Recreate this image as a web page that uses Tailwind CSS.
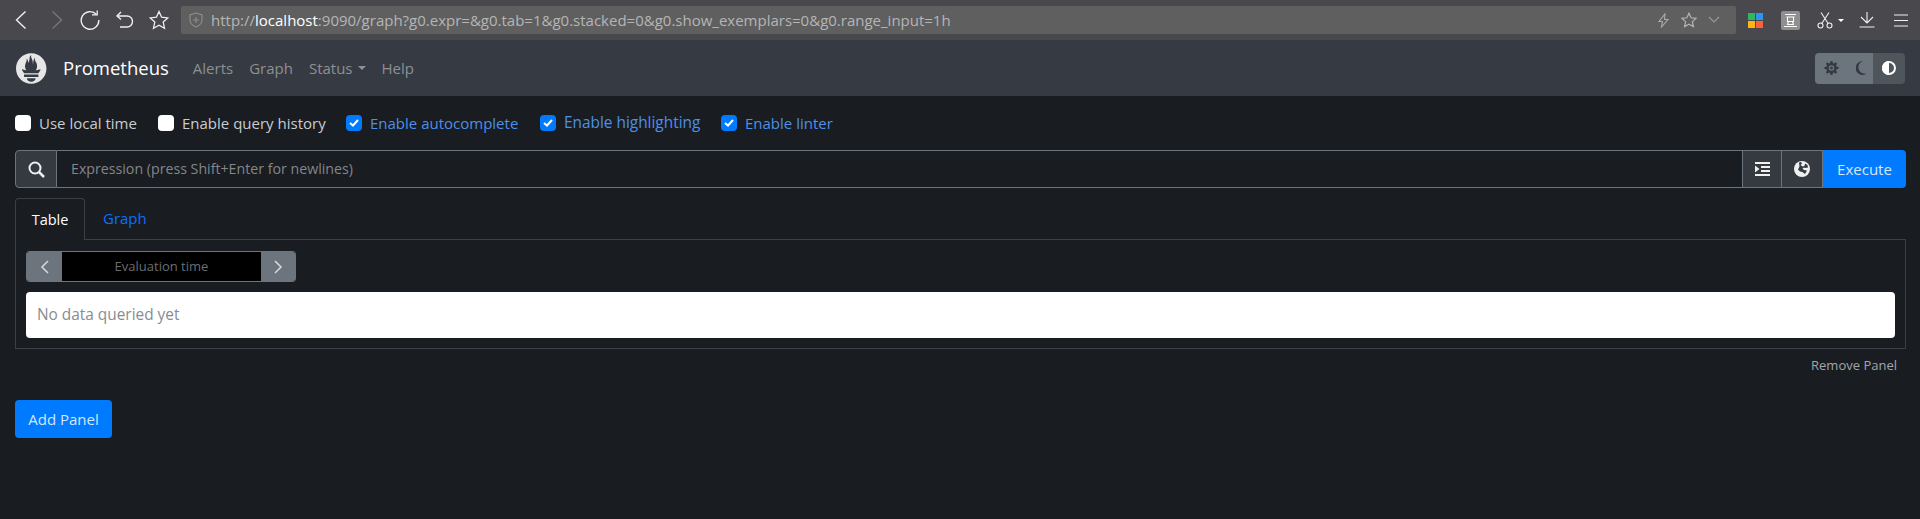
<!doctype html>
<html lang="en">
<head>
    <meta charset="utf-8">
    <title>Prometheus Time Series Collection and Processing Server</title>
    <script src="https://cdn.jsdelivr.net/npm/@tailwindcss/browser@4"></script>
</head>
<body class="bg-[#191c21] h-[519px] overflow-hidden font-['Open_Sans',sans-serif] text-[15px] text-[#c9ccd0]">

    <!-- Browser toolbar -->
    <div class="h-[40px] bg-[#49484d] flex items-center text-[#f2f2f2]">
        <div class="w-[181px] shrink-0 flex items-center pl-[15px]">
            <svg class="w-[12px] h-[20px]" viewBox="0 0 12 20" fill="none" stroke="#f0f0f0" stroke-width="1.4"><path d="M10.5 1.5 1.5 10l9 8.500"/></svg>
            <svg class="w-[12px] h-[20px] ml-[24px]" viewBox="0 0 12 20" fill="none" stroke="#77777a" stroke-width="1.4"><path d="M1.500 1.500 10.500 10l-9 8.500"/></svg>
            <svg class="w-[20px] h-[20px] ml-[17px]" viewBox="0 0 20 20" fill="none" stroke="#f0f0f0" stroke-width="1.400"><path d="M16.500 4.500A8.800 8.800 0 1 0 18.800 10"/><path d="M12 4.800h5.200V0.500" stroke-width="1.300"/></svg>
            <svg class="w-[18px] h-[18px] ml-[16px]" viewBox="0 0 18 18" fill="none" stroke="#f0f0f0" stroke-width="1.400"><path d="M1 5h10a5.500 5.500 0 0 1 0 11H4"/><path d="M5 1 1 5l4 3.500"/></svg>
            <svg class="w-[20px] h-[20px] ml-[15px]" viewBox="0 0 20 20" fill="none" stroke="#f0f0f0" stroke-width="1.300"><path d="m10 1.500 2.600 5.700 6.200.7-4.600 4.200 1.300 6.100L10 15.200l-5.500 3 1.300-6.100L1.200 7.900l6.200-.7z"/></svg>
        </div>
        <div class="w-[1555px] h-[28px] bg-[#5f5f60] rounded-[2px] flex items-center pl-[8px] pr-[16px] shrink-0">
            <svg class="w-[14px] h-[16px] shrink-0" viewBox="0 0 14 16" fill="none" stroke="#8e8e90" stroke-width="1.100"><path d="M7 1 1 3v5c0 3.500 3 5.800 6 7 3-1.200 6-3.500 6-7V3z"/><path d="M7 5v6M4 8h6"/></svg>
            <div class="ml-[8px] text-[15px] text-[#b5b5b6] whitespace-nowrap">http://<span class="text-white">localhost</span>:9090/graph?g0.expr=&amp;g0.tab=1&amp;g0.stacked=0&amp;g0.show_exemplars=0&amp;g0.range_input=1h</div>
            <div class="ml-auto flex items-center gap-[11px]">
                <svg class="w-[13px] h-[15px]" viewBox="0 0 13 15" fill="none" stroke="#a9a9aa" stroke-width="1.100"><path d="M8 .8 2 8.500h3.500L4.500 14 11 6.500H7.500z"/></svg>
                <svg class="w-[16px] h-[16px]" viewBox="0 0 20 20" fill="none" stroke="#b5b5b6" stroke-width="1.500"><path d="m10 1.500 2.600 5.700 6.200.7-4.600 4.200 1.300 6.100L10 15.200l-5.500 3 1.300-6.100L1.200 7.900l6.200-.7z"/></svg>
                <svg class="w-[12px] h-[8px]" viewBox="0 0 12 8" fill="none" stroke="#9a9a9b" stroke-width="1.100"><path d="m1 1 5 5 5-5"/></svg>
            </div>
        </div>
        <div class="flex-1 flex items-center pl-[12px]">
            <div class="grid grid-cols-2 gap-[1px] w-[15px] h-[15px]">
                <div class="bg-[#2fb85f]"></div><div class="bg-[#2e94f2]"></div>
                <div class="bg-[#fdb614]"></div><div class="bg-[#f9623a]"></div>
            </div>
            <div class="w-[19px] h-[19px] ml-[18px] bg-[#8f8f90] rounded-[2px] flex items-center justify-center">
                <svg class="w-[15px] h-[15px]" viewBox="0 0 15 15" fill="none" stroke="#fff" stroke-width="1.100"><path d="M2 1.500h11M3.500 4h8M4.500 4v4.500h6V4M5.500 8.500l-1 3h6l-1-3M1 13.500h13"/></svg>
            </div>
            <svg class="w-[16px] h-[17px] ml-[17px]" viewBox="0 0 16 17" fill="none" stroke="#f0f0f0" stroke-width="1.100"><circle cx="3.500" cy="13.500" r="2.500"/><circle cx="12.500" cy="13.500" r="2.500"/><path d="M4.800 11.500 12 .5M11.200 11.500 4 .5"/></svg>
            <div class="ml-[5px] border-x-[3px] border-t-[3px] border-x-transparent border-t-white"></div>
            <svg class="w-[16px] h-[16px] ml-[15px]" viewBox="0 0 16 16" fill="none" stroke="#f0f0f0" stroke-width="1.100"><path d="M8 0v11M2 5l6 6 6-6M.5 15h15"/></svg>
            <svg class="w-[14px] h-[13px] ml-[19px]" viewBox="0 0 14 13" fill="none" stroke="#f0f0f0" stroke-width="1.100"><path d="M0 1h14M0 6.500h14M0 12h14"/></svg>
        </div>
    </div>

    <!-- Navbar -->
    <nav class="h-[56px] bg-[#363a42] flex items-center pl-[16px] pr-[15px]">
        <svg class="w-[31px] h-[31px] shrink-0" viewBox="0 0 115.333 114" fill="#e6e6e6"><path d="M56.667.667C25.372.667 0 26.036 0 57.332c0 31.295 25.372 56.666 56.667 56.666s56.666-25.371 56.666-56.666C113.333 26.036 87.961.667 56.667.667zm0 106.055c-8.904 0-16.123-5.948-16.123-13.283H72.790c0 7.334-7.219 13.283-16.123 13.283zm26.628-17.682H30.034v-9.657h53.262v9.657zm-.191-14.628H30.197c-.176-.203-.356-.403-.526-.609-5.452-6.620-6.736-10.076-7.983-13.598-.021-.116 6.611 1.355 11.314 2.413 0 0 2.420.560 5.958 1.205-3.397-3.982-5.414-9.044-5.414-14.218 0-11.359 8.712-21.285 5.569-29.308 3.059.249 6.331 6.456 6.552 16.161 3.252-4.494 4.613-12.701 4.613-17.733 0-5.210 3.433-11.262 6.867-11.469-3.061 5.045.793 9.370 4.219 20.099 1.285 4.030 1.121 10.812 2.113 15.113.329-8.933 1.865-21.967 7.532-26.467-2.500 5.667.370 12.758 2.333 16.167 3.167 5.500 5.087 9.667 5.087 17.548 0 5.284-1.951 10.259-5.242 14.148 3.742-.702 6.326-1.335 6.326-1.335l12.152-2.371c.001-.001-1.765 7.261-8.562 14.254z"/></svg>
        <span class="ml-[16px] text-[18.5px] text-white">Prometheus</span>
        <div class="ml-[24px] flex items-center text-[15px] text-[#8d9094]">
            <a>Alerts</a>
            <a class="ml-[16px]">Graph</a>
            <a class="ml-[16px] flex items-center">Status<span class="ml-[5px] border-x-[4px] border-t-[4px] border-x-transparent border-t-[#8d9094]"></span></a>
            <a class="ml-[16px]">Help</a>
        </div>
        <div class="ml-auto h-[31px] flex rounded-[4px] overflow-hidden">
            <div class="w-[58px] bg-[#6c757d] flex items-center justify-between pl-[9px] pr-[6px]">
                <svg class="w-[15px] h-[15px]" viewBox="0 0 16 16" fill="#343a40"><path fill-rule="evenodd" d="M7 0h2l.4 2.100 1.300.5L12.500 1.400 14 2.800l-1.200 1.800.6 1.300 2.100.4v2l-2.100.4-.6 1.300L14 12l-1.500 1.500-1.800-1.200-1.300.6L9 15H7l-.4-2.100-1.300-.6L3.500 13.500 2 12l1.200-1.800-.6-1.300L.5 8.500v-2l2.100-.4.6-1.300L2 2.800l1.500-1.400 1.800 1.200 1.300-.5zM8 4.500a3 3 0 1 0 0 6 3 3 0 0 0 0-6zm0 1.500a1.500 1.500 0 1 1 0 3 1.500 1.500 0 0 1 0-3z"/></svg>
                <svg class="w-[11px] h-[14px]" viewBox="0 0 11 14" fill="#343a40"><path d="M7 0a7 7 0 1 0 4 12.500A6 6 0 0 1 7 0z"/></svg>
            </div>
            <div class="w-[32px] bg-[#4e555b] flex items-center justify-center">
                <svg class="w-[14px] h-[14px]" viewBox="0 0 14 14"><circle cx="7" cy="7" r="6" fill="none" stroke="#fff" stroke-width="2"/><path d="M7 0a7 7 0 0 0 0 14z" fill="#fff"/></svg>
            </div>
        </div>
    </nav>

    <!-- Options -->
    <div class="h-[54px] px-[15px] flex items-center">
        <label class="flex items-center w-[143px]"><span class="w-[16px] h-[16px] bg-white rounded-[4px]"></span><span class="ml-[8px]">Use local time</span></label>
        <label class="flex items-center w-[188px]"><span class="w-[16px] h-[16px] bg-white rounded-[4px]"></span><span class="ml-[8px]">Enable query history</span></label>
        <label class="flex items-center w-[194px] text-[#4d90e6]"><span class="w-[16px] h-[16px] bg-[#007bff] rounded-[4px] flex items-center justify-center"><svg class="w-[10px] h-[8px]" viewBox="0 0 10 8" fill="none" stroke="#fff" stroke-width="2"><path d="m1 4 3 2.500L9 1"/></svg></span><span class="ml-[8px]">Enable autocomplete</span></label>
        <label class="flex items-center w-[181px] text-[#4d90e6]"><span class="w-[16px] h-[16px] bg-[#007bff] rounded-[4px] flex items-center justify-center"><svg class="w-[10px] h-[8px]" viewBox="0 0 10 8" fill="none" stroke="#fff" stroke-width="2"><path d="m1 4 3 2.500L9 1"/></svg></span><span class="ml-[8px] text-[15.400px]">Enable highlighting</span></label>
        <label class="flex items-center text-[#4d90e6]"><span class="w-[16px] h-[16px] bg-[#007bff] rounded-[4px] flex items-center justify-center"><svg class="w-[10px] h-[8px]" viewBox="0 0 10 8" fill="none" stroke="#fff" stroke-width="2"><path d="m1 4 3 2.500L9 1"/></svg></span><span class="ml-[8px]">Enable linter</span></label>
    </div>

    <div class="pl-[15px] pr-[14px]">
        <!-- Expression bar -->
        <div class="h-[38px] flex">
            <div class="w-[42px] bg-[#343a40] border border-[#6c757d] rounded-l-[4px] flex items-center justify-center">
                <svg class="w-[17px] h-[17px]" viewBox="0 0 17 17" fill="none" stroke="#f0f0f0" stroke-width="2"><circle cx="7" cy="7" r="5.500"/><path d="m11 11 5 5" stroke-width="2.500"/></svg>
            </div>
            <div class="flex-1 border-y border-[#6c757d] pl-[14px] flex items-center text-[14.200px] text-[#83868a]">Expression (press Shift+Enter for newlines)</div>
            <div class="w-[40px] bg-[#343a40] border border-[#6c757d] flex items-center justify-center">
                <svg class="w-[15px] h-[14px]" viewBox="0 0 15 14" fill="#f0f0f0"><path d="M0 0h15v2H0zM6 4h9v2H6zM6 8h9v2H6zM0 12h15v2H0zM0 3.500 4.500 7 0 10.500z"/></svg>
            </div>
            <div class="w-[41px] bg-[#343a40] border-y border-r border-[#6c757d] flex items-center justify-center">
                <svg class="w-[16px] h-[16px]" viewBox="0 0 16 16"><circle cx="8" cy="8" r="8" fill="#f0f0f0"/><path d="M5 1.500 7 1l1 1.500-1.500 1.500 2 1.500 2-.5.500-2.500 2.500 1.500.5 2.500-3 .5-1-.5-1.500 1 1.500 1.500 3 .5-2 3.500-2.500-2-2.500-.5-2-2 1.500-3z" fill="#343a40"/></svg>
            </div>
            <div class="w-[83px] bg-[#007bff] rounded-r-[4px] flex items-center justify-center text-[#d5e6fb]">Execute</div>
        </div>

        <!-- Tabs -->
        <div class="mt-[10px] h-[42px] flex border-b border-[#3c4045]">
            <div class="w-[70px] h-[42px] border border-b-0 border-[#3c4045] rounded-t-[4px] bg-[#191c21] flex items-center justify-center text-[14.500px] text-white">Table</div>
            <div class="ml-[18px] h-[41px] flex items-center text-[15px] text-[#0d6efd]">Graph</div>
        </div>

        <!-- Panel body -->
        <div class="h-[109px] border-x border-b border-[#3c4045] px-[10px] pt-[11px]">
            <div class="w-[270px] h-[31px] flex rounded-[4px] overflow-hidden border-y border-[#6c757d]">
                <div class="w-[36px] bg-[#6c757d] flex items-center justify-center">
                    <svg class="w-[9px] h-[14px]" viewBox="0 0 9 14" fill="none" stroke="#d8dadc" stroke-width="1.500"><path d="M8 1 2 7l6 6"/></svg>
                </div>
                <div class="flex-1 bg-black flex items-center justify-center text-[13px] text-[#6a6e73]">Evaluation time</div>
                <div class="w-[35px] bg-[#6c757d] flex items-center justify-center">
                    <svg class="w-[9px] h-[14px]" viewBox="0 0 9 14" fill="none" stroke="#d8dadc" stroke-width="1.500"><path d="m1 1 6 6-6 6"/></svg>
                </div>
            </div>
            <div class="mt-[10px] h-[46px] bg-white rounded-[4px] pl-[11px] flex items-center text-[15.400px] text-[#888c91]">No data queried yet</div>
        </div>

        <div class="h-[33px] flex items-center justify-end pr-[9px] text-[13px] text-[#a3a6a9]">Remove Panel</div>

        <button class="mt-[18px] w-[97px] h-[38px] bg-[#007bff] rounded-[4px] text-[15px] text-[#d5e6fb]">Add Panel</button>
    </div>
</body>
</html>
